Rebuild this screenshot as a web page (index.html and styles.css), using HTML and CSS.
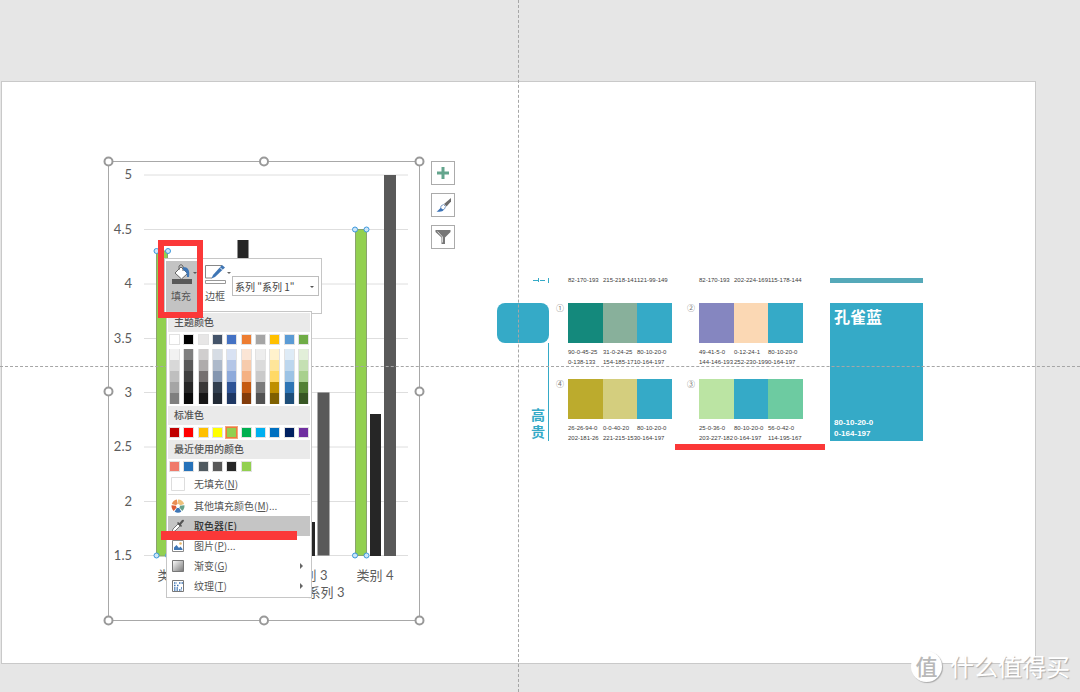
FILE: index.html
```
<!DOCTYPE html>
<html lang="zh-CN">
<head>
<meta charset="utf-8">
<title>图表填充 - 取色器</title>
<link rel="stylesheet" href="styles.css">
</head>
<body>
<main class="workspace">
  <section class="slide" aria-label="幻灯片"></section>

  <svg class="chart" width="324" height="472" viewBox="102 155 324 472" role="img" aria-label="柱形图">
    <g class="chart-grid">
      <path d="M144 175H408M144 229.500H408M144 284H408M144 338.500H408M144 392.500H408M144 447H408M144 501.500H408M144 555.500H408"/>
    </g>
    <g class="chart-text chart-axis">
      <text x="132" y="179">5</text><text x="132" y="234">4.5</text><text x="132" y="288">4</text><text x="132" y="343">3.5</text><text x="132" y="397">3</text><text x="132" y="451">2.5</text><text x="132" y="506">2</text><text x="132" y="560">1.5</text>
    </g>
    <g class="bar-a"><rect x="156.500" y="251" width="11" height="305"/><rect x="355.500" y="229.500" width="11" height="326"/></g>
    <g class="bar-b"><rect x="237.500" y="240" width="11" height="316"/><rect x="304" y="522" width="11" height="34"/><rect x="370" y="414" width="11" height="142"/></g>
    <g class="bar-c"><rect x="317.500" y="392.500" width="12" height="163"/><rect x="384" y="175" width="12" height="381"/></g>
    <g class="chart-text chart-label">
      <text x="176" y="580">类别 1</text><text x="309" y="580">类别 3</text><text x="375" y="580">类别 4</text><text x="326" y="597">系列 3</text>
    </g>
    <rect class="chart-frame" x="108.500" y="161.500" width="311" height="459"/>
    <g class="handle">
      <circle cx="108.500" cy="161.500" r="4"/><circle cx="264" cy="161.500" r="4"/><circle cx="419.500" cy="161.500" r="4"/>
      <circle cx="108.500" cy="391.500" r="4"/><circle cx="419.500" cy="391.500" r="4"/>
      <circle cx="108.500" cy="620.500" r="4"/><circle cx="264" cy="620.500" r="4"/><circle cx="419.500" cy="620.500" r="4"/>
    </g>
    <g class="point">
      <circle cx="156.500" cy="251" r="2.500"/><circle cx="168" cy="251" r="2.500"/><circle cx="156.500" cy="555.500" r="2.500"/><circle cx="168" cy="555.500" r="2.500"/>
      <circle cx="355" cy="229.500" r="2.500"/><circle cx="366.500" cy="229.500" r="2.500"/><circle cx="355" cy="555.500" r="2.500"/><circle cx="366.500" cy="555.500" r="2.500"/>
    </g>
  </svg>

  <div class="chart-tools">
    <button type="button" aria-label="图表元素"><svg width="22" height="22" viewBox="0 0 22 22"><path fill="#64a58d" d="M9.500 5h3v4.500H17v3h-4.500V17h-3v-4.500H5v-3h4.500z"/></svg></button>
    <button type="button" aria-label="图表样式"><svg width="22" height="22" viewBox="0 0 22 22"><path fill="#6c6c6c" d="M19 4v3.500l-4.500 5-2.500-2.500z"/><path fill="#fff" stroke="#7f9fc8" d="M11.500 10.500l2 2-1 2.500-2 1-2-1 .500-3z"/><path fill="#3d74b8" d="M4.500 17.500c2-.500 2.500-3 4.500-3.500l2.500 2c-.500 1.500-3 2-7 1.500z"/></svg></button>
    <button type="button" aria-label="图表筛选器"><svg width="22" height="22" viewBox="0 0 22 22"><path fill="#777" d="M3.500 4h15v2L13 11.500V18H9.500v-6.500L3.500 6z"/><path fill="none" stroke="#d5d5d5" d="M5.500 5.500l5 5.500v5.500"/></svg></button>
  </div>

  <figure class="palette">
    <div class="mood">
      <svg class="mood-top" width="52" height="5" viewBox="0 0 52 5"><path fill="none" stroke="#35aac7" d="M36 2.500h5M43 2.500h5M41.500 0v4M51.500 0v5"/></svg>
      <div class="mood-chip"></div>
      <div class="mood-name">高<br>贵</div>
    </div>
    <div class="schemes">
      <div class="scheme tail"><i></i><p>82-170-193</p><p>215-218-141</p><p>121-99-149</p></div>
      <div class="scheme tail"><i></i><p>82-170-193</p><p>202-224-169</p><p>115-178-144</p></div>
      <div class="scheme"><i>①</i><b class="c-pine"></b><b class="c-sage"></b><b class="c-teal"></b><p>90-0-45-25<br>0-138-133</p><p>31-0-24-25<br>154-185-171</p><p>80-10-20-0<br>0-164-197</p></div>
      <div class="scheme"><i>②</i><b class="c-violet"></b><b class="c-peach"></b><b class="c-teal"></b><p>49-41-5-0<br>144-146-193</p><p>0-12-24-1<br>252-230-199</p><p>80-10-20-0<br>0-164-197</p></div>
      <div class="scheme"><i>④</i><b class="c-olive"></b><b class="c-straw"></b><b class="c-teal"></b><p>26-26-94-0<br>202-181-26</p><p>0-0-40-20<br>221-215-153</p><p>80-10-20-0<br>0-164-197</p></div>
      <div class="scheme"><i>③</i><b class="c-lime"></b><b class="c-teal"></b><b class="c-mint"></b><p>25-0-36-0<br>203-227-182</p><p>80-10-20-0<br>0-164-197</p><p>56-0-42-0<br>114-195-167</p></div>
    </div>
    <div class="feature">
      <div class="feature-prev"></div>
      <figcaption class="feature-card"><strong>孔雀蓝</strong><span>80-10-20-0<br>0-164-197</span></figcaption>
    </div>
  </figure>

  <div class="guide guide-v"></div>
  <div class="guide guide-h"></div>

  <div class="minibar">
    <button type="button" class="tool tool-on">
      <svg width="26" height="22" viewBox="0 0 26 22"><path fill="#fff" stroke="#666" d="M4 10l6-6 6.500 6.500-6 5.500z"/><path fill="none" stroke="#666" d="M8 7V3q2-3 4 0v5"/><path fill="#3f76b5" d="M12 4c5 0 7 3 6 10h-2c0-4-1-6-4-7z"/><path fill="#595959" d="M1 16h20v5H1zM22 9h4l-2 2z"/></svg>
      <span>填充</span>
    </button>
    <button type="button" class="tool">
      <svg width="26" height="22" viewBox="0 0 26 22"><path fill="none" stroke="#888" d="M17 2.500H.500v12.500H7"/><path fill="#3f76b5" d="M17 2l3 2.500L10 14l-3.500 1.500L8 12z"/><path fill="none" stroke="#fff" d="M15 4.500l2.500 2.500"/><path fill="#fff" stroke="#999" d="M.500 17.500h20v3h-20z"/><path fill="#666" d="M22 9h4l-2 2z"/></svg>
      <span>边框</span>
    </button>
    <label class="series"><select aria-label="图表元素"><option>系列 "系列 1"</option></select></label>
  </div>

  <div class="menu">
    <h2>主题颜色</h2>
    <div class="swatches">
      <button type="button" aria-label="白色" class="k0"></button><button type="button" aria-label="黑色" class="k1"></button><button type="button" aria-label="浅灰" class="k2"></button><button type="button" aria-label="蓝灰" class="k3"></button><button type="button" aria-label="蓝色" class="k4"></button><button type="button" aria-label="橙色" class="k5"></button><button type="button" aria-label="灰色" class="k6"></button><button type="button" aria-label="金色" class="k7"></button><button type="button" aria-label="浅蓝" class="k8"></button><button type="button" aria-label="绿色" class="k9"></button>
    </div>
    <div class="swatches shades" id="shades"></div>
    <h2>标准色</h2>
    <div class="swatches">
      <button type="button" aria-label="深红" class="s0"></button><button type="button" aria-label="红色" class="s1"></button><button type="button" aria-label="橙色" class="k7"></button><button type="button" aria-label="黄色" class="s3"></button><button type="button" aria-label="浅绿" class="s4 picked"></button><button type="button" aria-label="绿色" class="s5"></button><button type="button" aria-label="浅蓝" class="s6"></button><button type="button" aria-label="蓝色" class="s7"></button><button type="button" aria-label="深蓝" class="s8"></button><button type="button" aria-label="紫色" class="s9"></button>
    </div>
    <h2>最近使用的颜色</h2>
    <div class="swatches">
      <button type="button" aria-label="珊瑚红" class="r0"></button><button type="button" aria-label="蓝色" class="r1"></button><button type="button" aria-label="石板灰" class="r2"></button><button type="button" aria-label="深灰" class="r3"></button><button type="button" aria-label="黑灰" class="r4"></button><button type="button" aria-label="浅绿" class="s4"></button><i></i><i></i><i></i><i></i>
    </div>
    <button type="button" class="item"><svg width="14" height="14" viewBox="0 0 14 14"><path fill="#fff" stroke="#ddd" d="M.500.500h13v13H.500z"/></svg><span>无填充(<u>N</u>)</span></button>
    <hr>
    <button type="button" class="item"><svg width="14" height="14" viewBox="0 0 14 14"><g fill="none" stroke-width="4.500"><path stroke="#eec07b" d="M7 2.750A4.250 4.250 0 0 1 11 5.700"/><path stroke="#66a18a" d="M11.200 6.500A4.250 4.250 0 0 1 9.800 10.200"/><path stroke="#3f76b5" d="M9.200 10.700A4.250 4.250 0 0 1 4.800 10.700"/><path stroke="#db5b36" d="M4.200 10.200A4.250 4.250 0 0 1 2.800 6.500"/><path stroke="#e88d54" d="M3 5.700A4.250 4.250 0 0 1 6.300 2.750"/></g></svg><span>其他填充颜色(<u>M</u>)...</span></button>
    <button type="button" class="item item-on"><svg width="14" height="14" viewBox="0 0 14 14"><path fill="#fff" stroke="#777" d="M1 13l1-3 5-5 2 2-5 5z"/><path fill="#555" d="M6 4l1-1 1.500 1L11 1q2-1 2 1l-3 3.500L11 7l-1 1z"/></svg><span>取色器(<u>E</u>)</span></button>
    <button type="button" class="item"><svg width="14" height="14" viewBox="0 0 14 14"><path fill="#fff" stroke="#888" d="M1.500 1.500h11v11h-11z"/><path fill="#3f76b5" d="M3 11V8.500L5.500 6 8 9l1.500-1.500L11.500 10v1z"/><circle cx="9.500" cy="4.500" r="1.300" fill="#eeb867"/></svg><span>图片(<u>P</u>)...</span></button>
    <button type="button" class="item"><svg width="14" height="14" viewBox="0 0 14 14"><defs><linearGradient id="gray" x2="1" y2="1"><stop stop-color="#fff"/><stop offset="1" stop-color="#777"/></linearGradient></defs><path fill="url(#gray)" stroke="#777" d="M1.500 1.500h11v11h-11z"/></svg><span>渐变(<u>G</u>)</span><em></em></button>
    <button type="button" class="item"><svg width="14" height="14" viewBox="0 0 14 14"><path fill="#fff" stroke="#777" d="M1.500 1.500h11v11h-11z"/><path stroke="#3f76b5" stroke-width="1.500" stroke-dasharray="1.500 1" d="M3 4h3M8 4h4M3 6.500h2M6 6.500h2M3 9h5M10 9h1M3 11h8"/></svg><span>纹理(<u>T</u>)</span><em></em></button>
  </div>

  <div class="mark mark-fill"></div>
  <div class="mark mark-picker"></div>
  <div class="mark mark-scheme"></div>

  <div class="watermark"><b>值</b><span>什么值得买</span></div>
</main>
<script src="shades.js"></script>
</body>
</html>
```
FILE: shades.js
```
const shades = [
  ['#f2f2f2', '#d8d8d8', '#bfbfbf', '#a5a5a5', '#7f7f7f'],
  ['#7f7f7f', '#595959', '#3f3f3f', '#262626', '#0c0c0c'],
  ['#d0cece', '#aeabab', '#757070', '#3a3838', '#171616'],
  ['#d6dce4', '#adb9ca', '#8496b0', '#323f4f', '#222a35'],
  ['#d9e2f3', '#b4c6e7', '#8eaadb', '#2f5496', '#1f3864'],
  ['#fbe5d5', '#f7cbac', '#f4b183', '#c55a11', '#833c0b'],
  ['#ededed', '#dbdbdb', '#c9c9c9', '#7b7b7b', '#525252'],
  ['#fff2cc', '#fee599', '#ffd965', '#bf9000', '#7f6000'],
  ['#deebf6', '#bdd7ee', '#9cc3e5', '#2e75b5', '#1e4e79'],
  ['#e2efd9', '#c5e0b3', '#a8d08d', '#538135', '#375623']
];
const host = document.getElementById('shades');
shades.forEach((column) => {
  const box = document.createElement('div');
  column.forEach((color) => {
    const cell = document.createElement('button');
    cell.type = 'button';
    cell.style.background = color;
    cell.setAttribute('aria-label', color);
    box.append(cell);
  });
  host.append(box);
});
```
FILE: styles.css
```
* { box-sizing: border-box; }
body {
  margin: 0;
  font-family: "Noto Sans CJK SC", sans-serif;
  font-size: 10px;
  color: #555;
}
button { font: inherit; color: inherit; border: 0; padding: 0; background: none; }
i, em { font-style: normal; }
p, h2, figure { margin: 0; font-weight: 400; }

.workspace {
  position: relative;
  display: flex;
  min-height: 100vh;
  padding: 81px 44px 28px 1px;
  background: #e6e6e6;
  overflow: hidden;
}
.slide { flex: 1; background: #fff; border: 1px solid #c9c9c9; }

/* chart */
.chart { position: absolute; left: 102px; top: 155px; }
.chart-grid { stroke: #dedede; }
.chart-text { fill: #5c5c5c; font-size: 13px; }
.chart-axis { text-anchor: end; font-family: Lato, sans-serif; }
.chart-label { text-anchor: middle; font-family: Lato, "Noto Sans CJK SC", sans-serif; }
.bar-a { fill: #92d050; stroke: #8aa36e; }
.bar-b { fill: #262626; }
.bar-c { fill: #595959; }
.chart-frame { fill: none; stroke: #a8a8a8; }
.handle { fill: #fff; stroke: #999; stroke-width: 2; }
.point { fill: #cde6f8; stroke: #3c98dc; stroke-width: 1; }

.chart-tools {
  position: absolute;
  left: 431px;
  top: 161px;
  display: grid;
  gap: 8px;
}
.chart-tools button { width: 24px; height: 24px; border: 1px solid #ababab; background: #fff; }
.chart-tools svg { display: block; }

/* colour scheme picture */
.palette {
  position: absolute;
  left: 497px;
  top: 278px;
  display: flex;
  height: 163px;
  overflow: hidden;
}
.mood { width: 52px; color: #35aac7; }
.mood-top { display: block; }
.mood-chip { height: 40px; margin-top: 20px; border-radius: 8px; background: #35aac7; }
.mood-name {
  height: 98px;
  padding: 63px 3px 0 0;
  border-right: 1px solid #35aac7;
  font-size: 14px;
  font-weight: 700;
  line-height: 17px;
  text-align: right;
}
.schemes {
  display: grid;
  grid-template-columns: 131px 131px;
  grid-template-rows: 25px 76px 76px;
  padding-left: 7px;
}
.scheme {
  display: grid;
  grid-template-columns: 12px 35px 34px 35px;
  grid-template-rows: 40px 24px;
  align-content: start;
  color: #3c3c3c;
}
.scheme i { font-size: 8px; line-height: 9px; color: #777; }
.scheme p {
  padding-top: 4px;
  font-family: "Liberation Sans", sans-serif;
  font-size: 6px;
  line-height: 10px;
  white-space: nowrap;
}
.scheme i + b ~ p:nth-of-type(1) { grid-column: 2; }
.tail { grid-template-rows: 8px; }
.tail p { padding: 0; line-height: 5px; }
.c-teal { background: #35aac7; }
.c-pine { background: #14897c; }
.c-sage { background: #88b09b; }
.c-violet { background: #8586c0; }
.c-peach { background: #fbd8b4; }
.c-olive { background: #bcab2d; }
.c-straw { background: #d4ce7e; }
.c-lime { background: #bbe4a3; }
.c-mint { background: #6dcba1; }
.feature { width: 93px; margin-left: 12px; }
.feature-prev { height: 5px; background: #55a9b9; }
.feature-card {
  display: flex;
  flex-direction: column;
  justify-content: space-between;
  height: 138px;
  margin-top: 20px;
  padding: 1px 4px 2px;
  background: #35aac7;
  color: #fff;
}
.feature-card strong { font-size: 16px; line-height: 24px; }
.feature-card span {
  font: bold 8px/11px "Liberation Sans", sans-serif;
}

/* drawing guides */
.guide { position: absolute; }
.guide-v { left: 518px; top: 0; bottom: 0; border-left: 1px dashed #a6a6a6; }
.guide-h { left: 0; right: 0; top: 366px; border-top: 1px dashed #a6a6a6; }

/* floating toolbar */
.minibar {
  position: absolute;
  left: 164px;
  top: 258px;
  display: flex;
  height: 56px;
  padding: 2px 2px 0 1px;
  border: 1px solid #c6c6c6;
  background: #fff;
}
.tool {
  display: flex;
  flex-direction: column;
  align-items: flex-start;
  gap: 4px;
  width: 35px;
  padding: 2px 0 0 5px;
}
.tool svg { flex: none; }
.tool span { line-height: 14px; }
.tool-on { background: #c3c3c3; }
.tool + .tool { width: 31px; padding-left: 4px; }
.series { position: relative; padding-top: 15px; }
.series select {
  appearance: none;
  display: block;
  width: 87px;
  height: 20px;
  padding: 0 0 0 2px;
  border: 1px solid #bdbdbd;
  border-radius: 0;
  background: #fff;
  color: #444;
  font: inherit;
}
.series::after {
  content: "";
  position: absolute;
  right: 5px;
  top: 25px;
  border: 2px solid transparent;
  border-top-color: #555;
}

/* fill menu */
.menu {
  position: absolute;
  left: 166px;
  top: 311px;
  width: 146px;
  padding: 1px;
  border: 1px solid #c6c6c6;
  background: #fff;
}
.menu h2 {
  height: 19px;
  padding-left: 6px;
  background: #eaeaea;
  font-size: 10px;
  font-weight: 500;
  line-height: 18px;
}
.swatches {
  display: flex;
  justify-content: space-between;
  padding: 2px 1px;
}
.swatches button, .swatches i { display: block; width: 11px; height: 11px; }
.swatches button { border: 1px solid #e2e2e2; }
.shades button { border-width: 0 1px; }
.swatches .picked { border-color: #ef7a3e; outline: 1px solid #f4a57a; }
.k0 { background: #fff; }
.k1 { background: #000; }
.k2 { background: #e7e6e6; }
.k3 { background: #44546a; }
.k4 { background: #4472c4; }
.k5 { background: #ed7d31; }
.k6 { background: #a5a5a5; }
.k7 { background: #ffc000; }
.k8 { background: #5b9bd5; }
.k9 { background: #70ad47; }
.s0 { background: #c00000; }
.s1 { background: #f00; }
.s3 { background: #ff0; }
.s4 { background: #92d050; }
.s5 { background: #00b050; }
.s6 { background: #00b0f0; }
.s7 { background: #0070c0; }
.s8 { background: #002060; }
.s9 { background: #7030a0; }
.r0 { background: #f07a6b; }
.r1 { background: #2672b9; }
.r2 { background: #505a60; }
.r3 { background: #595959; }
.r4 { background: #262626; }
.item {
  display: flex;
  align-items: center;
  gap: 9px;
  width: 100%;
  height: 20px;
  padding: 0 7px 0 3px;
  line-height: 20px;
}
.item-on { background: #c5c5c5; color: #333; font-weight: 500; }
.item em { margin-left: auto; border: 3px solid transparent; border-left-color: #666; border-right: 0; }
.menu hr { height: 1px; margin: 0 0 1px; border: 0; background: #dcdcdc; }

/* red annotations */
.mark { position: absolute; background: #fb3838; }
.mark-fill { left: 158px; top: 240px; width: 45px; height: 78px; border: 6px solid #fb3838; background: none; }
.mark-picker { left: 161px; top: 531px; width: 136px; height: 9px; }
.mark-scheme { left: 675px; top: 444px; width: 150px; height: 6px; }

.watermark {
  position: absolute;
  right: 10px;
  bottom: 10px;
  display: flex;
  align-items: center;
  gap: 8px;
  color: #fff;
  font-size: 24px;
  line-height: 32px;
  text-shadow: 1px 1px 1px #aaa;
}
.watermark b {
  width: 31px;
  height: 31px;
  border-radius: 50%;
  background: #fff;
  box-shadow: 1px 1px 1px #aaa;
  color: #b8b8b8;
  font-size: 22px;
  font-weight: 500;
  line-height: 29px;
  text-align: center;
  text-shadow: none;
}
```
